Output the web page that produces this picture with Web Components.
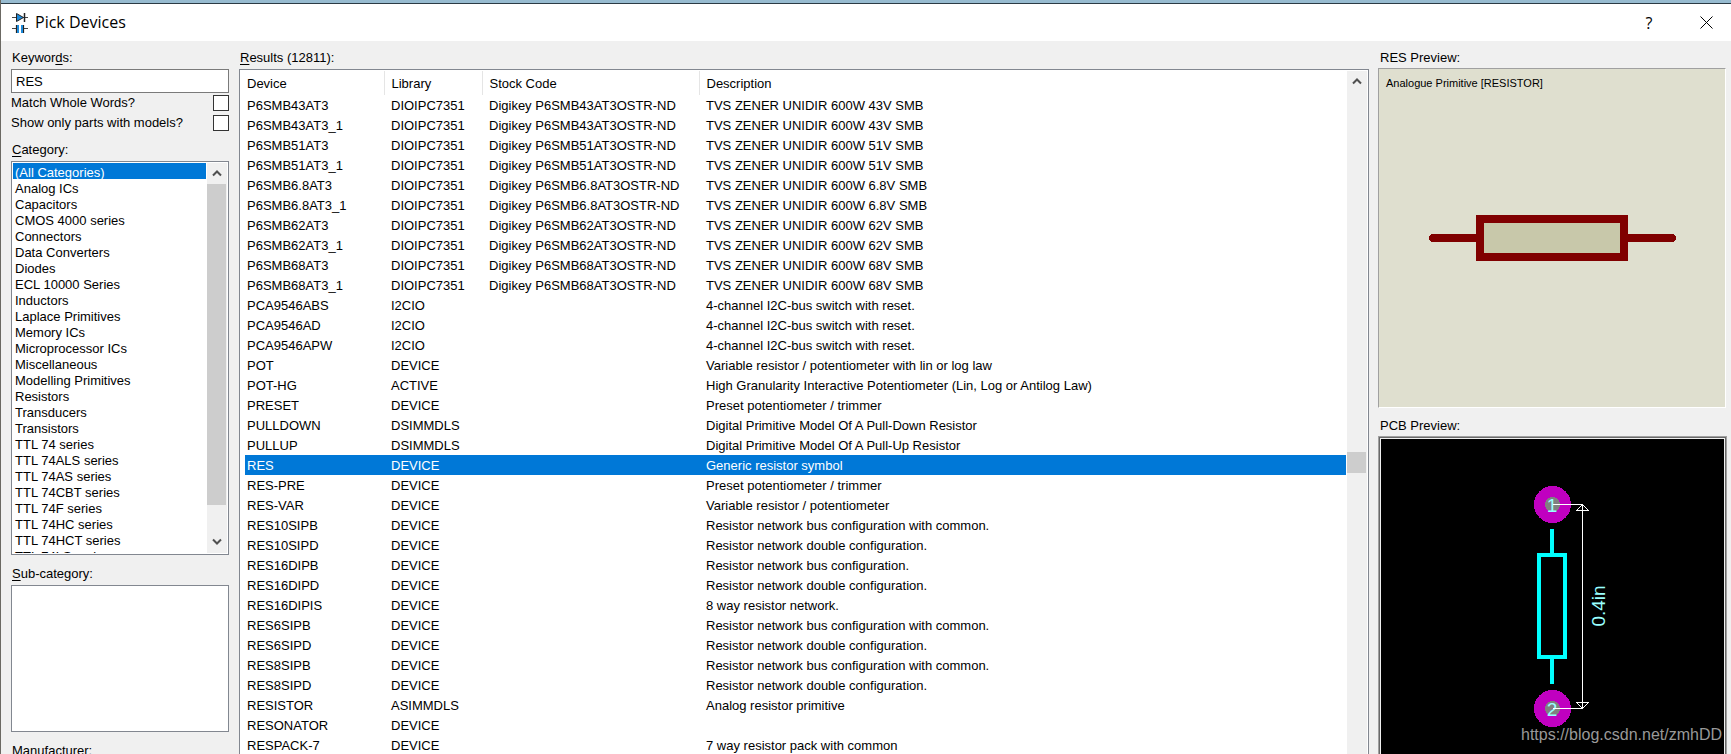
<!DOCTYPE html>
<html lang="en">
<head>
<meta charset="utf-8">
<title>Pick Devices</title>
<style>
  html, body { margin: 0; height: 100%; }
  body { font: 13px/16px "Liberation Sans", Arial, sans-serif; color: #000; background: #f0f0f0; overflow: hidden; }
</style>
</head>
<body>
<pick-dialog heading="Pick Devices">
  <search-panel slot="search"></search-panel>
  <results-panel slot="results"></results-panel>
  <preview-panel slot="preview"></preview-panel>
</pick-dialog>

<script>
const define = (name, html, setup) => {
  const template = document.createElement('template');
  template.innerHTML = html;
  customElements.define(name, class extends HTMLElement {
    constructor() {
      super();
      this.attachShadow({ mode: 'open' }).append(template.content.cloneNode(true));
    }
    connectedCallback() { if (setup) setup(this, this.shadowRoot); }
  });
};

/* Vertical scroll bar: --offset and --thumb set the place and length of the thumb */
define('scroll-bar', `
<style>
  :host { display: flex; flex-direction: column; width: 20px; background: #f0f0f0; overflow: hidden; }
  button { flex: none; height: 21px; padding: 0 0 2px; border: 0; background: #f0f0f0; display: flex; align-items: center; justify-content: center; }
  :host([endless]) .down { display: none; }
  .track { flex: 1; min-height: 0; padding-top: var(--offset, 0px); }
  .thumb { height: var(--thumb, 20px); width: 19px; background: #cdcdcd; }
  path { fill: none; stroke: #505050; stroke-width: 2; }
</style>
<button aria-label="Scroll up"><svg width="10" height="8"><path d="M1 6.500L5 2.500L9 6.500"/></svg></button>
<div class="track"><div class="thumb"></div></div>
<button class="down" aria-label="Scroll down"><svg width="10" height="8"><path d="M1 1.500L5 5.500L9 1.500"/></svg></button>
`);

define('title-bar', `
<style>
  :host { display: flex; align-items: center; gap: 7px; height: 37px; background: #fff; padding-left: 11px; }
  h1 { flex: 1; margin: 0; padding-bottom: 2px; font: 16px/20px "Open Sans", "Noto Sans", sans-serif; }
  button { width: 50px; height: 37px; padding: 0; border: 0; background: none; color: #000; font: 16px/20px "Open Sans", sans-serif; display: flex; align-items: center; justify-content: center; }
  .icon { fill: #1c8adb; stroke: #222; }
</style>
<svg class="icon" width="16" height="20" viewBox="0 0 16 20">
  <path fill="none" d="M0 4.500H16M0 15.500H4M12 15.500H16" stroke="#444"/>
  <path d="M4.500 .5V8.500L11.500 4.500Z"/><path d="M12.500 0V9" stroke-width="1.500"/>
  <path d="M4.500 12V20M11.500 12V20" stroke-width="1.200"/><path d="M5 12H7V20H5ZM9 12H11V20H9Z" stroke="none"/>
</svg>
<h1><slot></slot></h1>
<button aria-label="Help">?</button>
<button aria-label="Close"><svg width="13" height="13"><path d="M.5 .5L12.500 12.500M12.500 .5L.5 12.500" stroke="#000" fill="none"/></svg></button>
`);

define('pick-dialog', `
<style>
  :host { display: flex; flex-direction: column; height: 100vh; box-sizing: border-box; overflow: hidden; border-left: 1px solid #6b6963; background: #f0f0f0; }
  .edge { flex: none; height: 3px; background: #97bbd0; border-bottom: 1px solid #2b3a44; margin-left: -1px; }
  title-bar { flex: none; }
  main { flex: 1; min-height: 0; display: grid; grid-template-columns: 219px minmax(0, 1fr) 350px; grid-template-rows: minmax(0, 1fr); column-gap: 9px; padding: 8px 3px 0 10px; }
</style>
<div class="edge"></div>
<title-bar></title-bar>
<main><slot name="search"></slot><slot name="results"></slot><slot name="preview"></slot></main>
`, (host, root) => { root.querySelector('title-bar').textContent = host.getAttribute('heading'); });

const categories = ['(All Categories)', 'Analog ICs', 'Capacitors', 'CMOS 4000 series', 'Connectors', 'Data Converters', 'Diodes', 'ECL 10000 Series', 'Inductors', 'Laplace Primitives', 'Memory ICs', 'Microprocessor ICs', 'Miscellaneous', 'Modelling Primitives', 'Resistors', 'Transducers', 'Transistors', 'TTL 74 series', 'TTL 74ALS series', 'TTL 74AS series', 'TTL 74CBT series', 'TTL 74F series', 'TTL 74HC series', 'TTL 74HCT series', 'TTL 74LS series'];

define('search-panel', `
<style>
  :host { display: flex; flex-direction: column; min-height: 0; overflow: hidden; padding-right: 1px; }
  label { flex: none; }
  .caption { box-sizing: border-box; margin-left: 1px; height: 20px; line-height: 18px; }
  u { text-underline-offset: 2px; }
  input[type=text] { flex: none; box-sizing: border-box; height: 24px; margin: 0; padding: 0 4px; border: 1px solid #7a7a7a; border-radius: 0; background: #fff; font: inherit; color: inherit; outline: 0; }
  .check { display: flex; justify-content: space-between; align-items: center; height: 20px; line-height: 18px; }
  .check input { appearance: none; box-sizing: border-box; width: 16px; height: 16px; margin: 0; border: 1px solid #333; background: #fff; }
  .box { flex: none; display: flex; border: 1px solid #828790; background: #fff; padding: 1px; margin-bottom: 10px; }
  select { flex: 1; min-width: 0; height: 390px; margin: 0; padding: 0; border: 0; border-radius: 0; outline: 0; background: #fff; font: inherit; color: #000; scrollbar-width: none; }
  option { height: 16px; min-height: 16px; padding: 2px 2px 0; line-height: 14px; box-sizing: border-box; color: #000; }
  option:checked { background: linear-gradient(#0078d7, #0078d7); -webkit-text-fill-color: #fff; }
  scroll-bar { --thumb: 321px; margin-left: 1px; }
  .sub select { height: 143px; }
  .first { margin-bottom: 8px; }
</style>
<label class="caption" for="keywords">Keywor<u>d</u>s:</label>
<input type="text" id="keywords" value="RES">
<label class="check">Match Whole Words?<input type="checkbox"></label>
<label class="check first">Show only parts with models?<input type="checkbox"></label>
<label class="caption" for="category"><u>C</u>ategory:</label>
<div class="box"><select id="category" size="24"></select><scroll-bar></scroll-bar></div>
<label class="caption" for="sub"><u>S</u>ub-category:</label>
<div class="box sub"><select id="sub" size="9"></select></div>
<label class="caption"><u>M</u>anufacturer:</label>
`, (host, root) => {
  root.querySelector('#category').append(...categories.map((name, i) => new Option(name, name, i === 0, i === 0)));
});

const rows = [];
for (const v of ['43', '51', '6.8', '62', '68'])
  for (const suffix of ['', '_1'])
    rows.push([`P6SMB${v}AT3${suffix}`, 'DIOIPC7351', `Digikey P6SMB${v}AT3OSTR-ND`, `TVS ZENER UNIDIR 600W ${v}V SMB`]);
for (const [device, library, text] of [
  ['PCA9546ABS', 'I2CIO', '4-channel I2C-bus switch with reset.'],
  ['PCA9546AD', 'I2CIO', '4-channel I2C-bus switch with reset.'],
  ['PCA9546APW', 'I2CIO', '4-channel I2C-bus switch with reset.'],
  ['POT', 'DEVICE', 'Variable resistor / potentiometer with lin or log law'],
  ['POT-HG', 'ACTIVE', 'High Granularity Interactive Potentiometer (Lin, Log or Antilog Law)'],
  ['PRESET', 'DEVICE', 'Preset potentiometer / trimmer'],
  ['PULLDOWN', 'DSIMMDLS', 'Digital Primitive Model Of A Pull-Down Resistor'],
  ['PULLUP', 'DSIMMDLS', 'Digital Primitive Model Of A Pull-Up Resistor'],
  ['RES', 'DEVICE', 'Generic resistor symbol'],
  ['RES-PRE', 'DEVICE', 'Preset potentiometer / trimmer'],
  ['RES-VAR', 'DEVICE', 'Variable resistor / potentiometer'],
  ['RES10SIPB', 'DEVICE', 'Resistor network bus configuration with common.'],
  ['RES10SIPD', 'DEVICE', 'Resistor network double configuration.'],
  ['RES16DIPB', 'DEVICE', 'Resistor network bus configuration.'],
  ['RES16DIPD', 'DEVICE', 'Resistor network double configuration.'],
  ['RES16DIPIS', 'DEVICE', '8 way resistor network.'],
  ['RES6SIPB', 'DEVICE', 'Resistor network bus configuration with common.'],
  ['RES6SIPD', 'DEVICE', 'Resistor network double configuration.'],
  ['RES8SIPB', 'DEVICE', 'Resistor network bus configuration with common.'],
  ['RES8SIPD', 'DEVICE', 'Resistor network double configuration.'],
  ['RESISTOR', 'ASIMMDLS', 'Analog resistor primitive'],
  ['RESONATOR', 'DEVICE', ''],
  ['RESPACK-7', 'DEVICE', '7 way resistor pack with common'],
]) rows.push([device, library, '', text]);

define('results-panel', `
<style>
  :host { display: flex; flex-direction: column; min-height: 0; }
  .caption { flex: none; height: 20px; margin-left: 1px; line-height: 18px; }
  u { text-underline-offset: 2px; }
  .box { flex: 1; min-height: 0; display: flex; border: 1px solid #828790; border-bottom: 0; background: #fff; padding: 1px 1px 0 5px; overflow: hidden; }
  .view { flex: 1; min-width: 0; overflow: hidden; }
  table { width: 100%; border-collapse: collapse; table-layout: fixed; }
  th, td { box-sizing: border-box; padding: 2px 0 0 7px; text-align: left; font-weight: normal; white-space: nowrap; overflow: hidden; }
  th:first-child, td:first-child { padding-left: 2px; }
  th { height: 24px; border-right: 1px solid #e5e5e5; line-height: 22px; }
  th:last-child { border-right: 0; }
  td { height: 20px; line-height: 18px; }
  .selected { background: #0078d7; color: #fff; }
  .device { width: 139px; } .library { width: 98px; } .stock { width: 217px; }
  scroll-bar { --offset: 360px; --thumb: 21px; margin-left: 1px; }
</style>
<div class="caption"><u>R</u>esults (12811):</div>
<div class="box">
  <div class="view"><table>
    <thead><tr><th class="device">Device</th><th class="library">Library</th><th class="stock">Stock Code</th><th>Description</th></tr></thead>
    <tbody></tbody>
  </table></div>
  <scroll-bar endless></scroll-bar>
</div>
`, (host, root) => {
  const body = root.querySelector('tbody');
  for (const cells of rows) {
    const row = body.insertRow();
    if (cells[0] === 'RES') row.className = 'selected';
    for (const text of cells) row.insertCell().textContent = text;
  }
});

define('preview-panel', `
<style>
  :host { display: flex; flex-direction: column; min-height: 0; position: relative; overflow: hidden; }
  .caption { flex: none; height: 19px; margin-left: 2px; line-height: 18px; }
  svg { display: block; flex: none; shape-rendering: crispEdges; }
  .symbol { flex: none; height: 338px; display: flex; flex-direction: column; align-items: center; background: #dfdfcf; border: 1px solid #a0a0a0; border-right-color: #fff; border-bottom-color: #fff; margin: 0 2px 9px 0; position: relative; }
  .symbol p { position: absolute; left: 7px; top: 6px; margin: 0; font-size: 11px; }
  .pcb { flex: 1; min-height: 0; display: flex; justify-content: center; background: #000; border: 1px solid #f0f0f0; border-bottom: 0; outline: 1px solid #696969; box-shadow: 0 0 0 2px #a0a0a0; margin: 2px 3px 0 2px; overflow: hidden; }
  .pcb text { font: 19px "Liberation Sans", Arial, sans-serif; fill: #9ff; text-anchor: middle; }
  .mark { position: absolute; right: 6px; bottom: 9px; font-size: 16px; line-height: 20px; color: #999; }
</style>
<div class="caption">RES Preview:</div>
<div class="symbol">
  <p>Analogue Primitive [RESISTOR]</p>
  <svg width="346" height="336" viewBox="0 0 346 336">
    <path d="M54 169H293" stroke="#800000" stroke-width="8" stroke-linecap="round"/>
    <rect x="101" y="150" width="144" height="38" fill="#c8c8aa" stroke="#800000" stroke-width="8"/>
  </svg>
</div>
<div class="caption">PCB Preview:</div>
<div class="pcb">
  <svg width="343" height="315" viewBox="0 0 343 315">
    <g fill="#c000c0"><circle cx="171.500" cy="65.500" r="18.500"/><circle cx="171.500" cy="269.500" r="18.500"/></g>
    <g fill="#808080"><circle cx="171.500" cy="65.500" r="7.500"/><circle cx="171.500" cy="269.500" r="7.500"/></g>
    <g fill="none" stroke="#0ff" stroke-width="4"><path d="M171 90V114M171 220V245"/><rect x="158" y="116" width="26" height="102"/></g>
    <text x="171" y="73">1</text><text x="171" y="277">2</text>
    <path d="M172 65.500H201.500V269.500H172M201.500 65.500L195.500 71.500H207.500ZM201.500 269.500L195.500 263.500H207.500Z" fill="none" stroke="#fff"/>
    <text transform="translate(224 167) rotate(-90)">0.4in</text>
  </svg>
</div>
<div class="mark">https://blog.csdn.net/zmhDD</div>
`);
</script>
</body>
</html>
